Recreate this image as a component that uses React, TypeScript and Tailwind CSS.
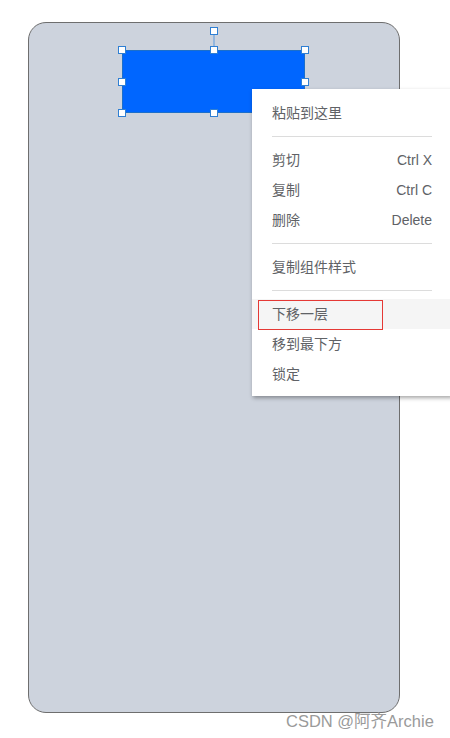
import type { ReactNode } from 'react';

const font = { fontFamily: '"Liberation Sans", "Noto Sans CJK SC", sans-serif' };

function Handle({ className }: { className: string }) {
  return <div className={`absolute h-2 w-2 border border-[#2f7fd3] bg-white ${className}`} />;
}

function Item({ label, keys, hover, children }: { label: string; keys?: string; hover?: boolean; children?: ReactNode }) {
  return (
    <div className={`relative flex h-[30px] items-center justify-between px-5 ${hover ? 'bg-[#f5f5f5]' : ''}`}>
      <span>{label}</span>
      {keys && <span>{keys}</span>}
      {children}
    </div>
  );
}

function Divider() {
  return <div className="mx-5 my-2 h-px bg-[#dcdcdc]" />;
}

export default function App() {
  return (
    <div className="relative h-[738px] w-[450px] overflow-hidden bg-white" style={font}>
      <div className="pl-[28px] pt-[22px]">
        <div className="relative h-[691px] w-[372px] rounded-[18px] border border-[#6e6e6e] bg-[#cdd3dd]">
          {/* selected component on the canvas */}
          <div className="absolute left-[93px] top-[27px] h-[63px] w-[183px] border border-[#1c6fc9] bg-[#0066ff]">
            <div className="absolute left-1/2 top-[-16px] h-4 w-px -translate-x-1/2 bg-[#5a9ae0]" />
            <Handle className="left-1/2 top-[-24px] -translate-x-1/2" />
            <Handle className="left-[-5px] top-[-5px]" />
            <Handle className="left-1/2 top-[-5px] -translate-x-1/2" />
            <Handle className="right-[-5px] top-[-5px]" />
            <Handle className="left-[-5px] top-1/2 -translate-y-1/2" />
            <Handle className="right-[-5px] top-1/2 -translate-y-1/2" />
            <Handle className="bottom-[-5px] left-[-5px]" />
            <Handle className="bottom-[-5px] left-1/2 -translate-x-1/2" />
            <Handle className="bottom-[-5px] right-[-5px]" />
          </div>
        </div>
      </div>

      {/* context menu */}
      <div className="absolute left-[252px] top-[89px] flex w-[200px] flex-col bg-white pb-[7px] pt-[9px] text-[14px] text-[#606266] shadow-[1px_2px_4px_rgba(0,0,0,0.35)]">
        <Item label="粘贴到这里" />
        <Divider />
        <Item label="剪切" keys="Ctrl X" />
        <Item label="复制" keys="Ctrl C" />
        <Item label="删除" keys="Delete" />
        <Divider />
        <Item label="复制组件样式" />
        <Divider />
        <Item label="下移一层" hover>
          <div className="absolute left-[6px] top-px h-[30px] w-[125px] border border-[#e53935]" />
        </Item>
        <Item label="移到最下方" />
        <Item label="锁定" />
      </div>

      <div className="absolute left-[286px] top-[709px] text-[16.5px] text-[#9a9a9a]">CSDN @阿齐Archie</div>
    </div>
  );
}
